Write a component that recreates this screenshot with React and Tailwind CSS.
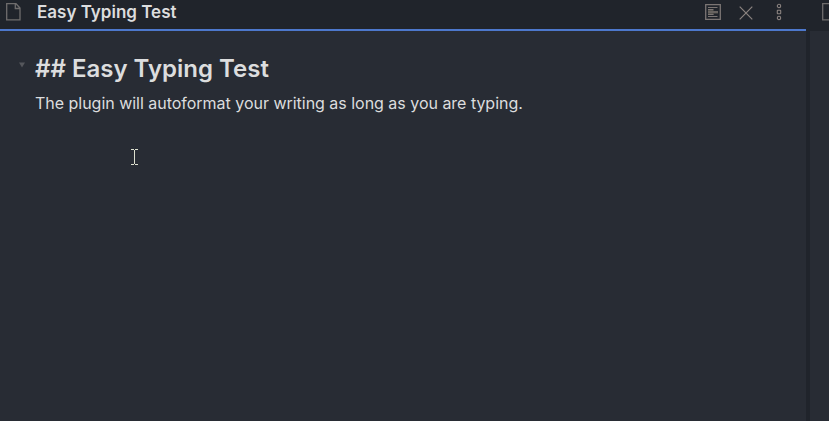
function FileIcon() {
  return (
    <svg width="15" height="18" viewBox="0 0 15 18" fill="none" stroke="#6f6d6d" strokeWidth="1.3" className="block shrink-0">
      <path d="M.7 .7H10L14 5V16.8H.7ZM9.3 .8V5.5H14" />
    </svg>
  );
}

function PreviewIcon() {
  return (
    <svg width="16" height="16" viewBox="0 0 16 16" fill="none" stroke="#7b7573" className="block shrink-0">
      <path d="M.7 .7H15.3V15.3H.7Z" strokeWidth="1.3" />
      <path d="M3 6H8.5V7H13V9.5H8.5V11H3Z" fill="#55534f" stroke="none" />
      <path d="M3 3.5H12.5M3 5.5H8.5M3 8H13M3 10.5H8.5M3 12.5H12.5" />
    </svg>
  );
}

function CloseIcon() {
  return (
    <svg width="14" height="14" viewBox="0 0 14 14" fill="none" stroke="#8b8380" strokeWidth="1.2" className="block shrink-0">
      <path d="M.7 .7L13.3 13.3M13.3 .7L.7 13.3" />
    </svg>
  );
}

function MoreIcon() {
  return (
    <svg width="6" height="18" viewBox="0 0 6 18" fill="none" stroke="#8b8380" strokeWidth="1.1" className="block shrink-0">
      <circle cx="3" cy="3" r="1.7" />
      <rect x="1.3" y="7.3" width="3.4" height="3.4" rx=".4" />
      <circle cx="3" cy="15" r="1.7" />
    </svg>
  );
}

export default function App() {
  return (
    <div className="flex h-[421px] w-[829px] overflow-hidden bg-[#20242b] font-['Inter',sans-serif] text-[#dcddde]">
      <main className="flex w-[806px] shrink-0 flex-col">
        <header className="flex h-[31px] shrink-0 border-b-2 border-[#4d78cc] pl-1.5">
          <div className="pt-[3px]"><FileIcon /></div>
          <h1 className="ml-4 whitespace-nowrap text-[17px] leading-6 font-semibold">Easy Typing Test</h1>
          <div className="ml-auto flex pr-6">
            <div className="pt-1"><PreviewIcon /></div>
            <div className="ml-[18px] pt-1.5"><CloseIcon /></div>
            <div className="ml-[23px] pt-[3px]"><MoreIcon /></div>
          </div>
        </header>
        <article className="flex-1 bg-[#282c34] pt-5">
          <div className="flex">
            <svg width="6" height="6" viewBox="0 0 6 6" fill="#55575c" className="mt-[11px] ml-[19px] shrink-0">
              <path d="M0 .5H6L3 5.5Z" />
            </svg>
            <h2 className="ml-[10px] whitespace-nowrap text-[24px] leading-9 font-semibold">## Easy Typing Test</h2>
          </div>
          <p className="ml-[35px] whitespace-nowrap text-[16px] leading-8 tracking-[-0.02px]">The plugin will autoformat your writing as long as you are typing.</p>
          <svg width="7" height="16" viewBox="0 0 7 16" fill="none" stroke="#dcdfce" className="mt-[30px] ml-[131px]" shapeRendering="crispEdges">
            <path d="M0 .5H3M4 .5H7M3.5 1V15M0 15.5H3M4 15.5H7" />
          </svg>
        </article>
      </main>
      <aside className="flex flex-1 flex-col pl-1">
        <div className="h-[31px] shrink-0 pt-[3px] pl-3"><FileIcon /></div>
        <div className="flex-1 bg-[#282c34]" />
      </aside>
    </div>
  );
}
